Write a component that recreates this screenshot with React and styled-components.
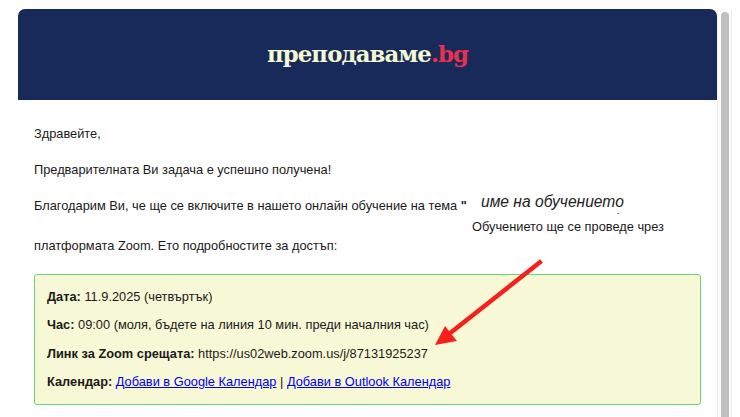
import React from "react";
import styled, { createGlobalStyle } from "styled-components";

const Global = createGlobalStyle`
  html, body { margin: 0; padding: 0; background: #fff; overflow: hidden; }
`;

const Page = styled.div`
  position: relative;
  width: 740px;
  height: 417px;
  overflow: hidden;
  display: flex;
  align-items: flex-start;
  padding: 9px 0 0 18px;
  box-sizing: border-box;
  font-family: "Liberation Sans", Arial, sans-serif;
  font-size: 12.8px;
  color: #1a1a1a;
`;

const Card = styled.main`
  width: 699px;
  flex: none;
`;

const Header = styled.header`
  height: 91px;
  background: #182a5a;
  border-radius: 7px 7px 0 0;
  display: flex;
  align-items: center;
  justify-content: center;
`;

const Logo = styled.div`
  font-family: "DejaVu Serif", serif;
  font-weight: 700;
  font-size: 22.8px;
  letter-spacing: -0.9px;
  color: #f7f8d2;
  margin-top: -1px;
  span { color: #e8304f; }
`;

const Body = styled.div`
  padding: 26px 16px 0;
  display: flex;
  flex-direction: column;
`;

const Para = styled.p`
  margin: 0;
  line-height: 16px;
  margin-bottom: ${(p) => p.$gap || 20}px;
`;

const TopicRow = styled.div`
  display: flex;
  align-items: flex-start;
  height: 41px;
`;

const TopicLead = styled.span`
  line-height: 16px;
  width: 438px;
  flex: none;
  margin-top: 1px;
  white-space: nowrap;
`;

const TopicSide = styled.div`
  display: flex;
  flex-direction: column;
`;

const TopicName = styled.span`
  font-style: italic;
  font-size: 15.6px;
  line-height: 20px;
  margin: -5px 0 0 9px;
  color: #222;
`;

const TopicDot = styled.i`
  display: block;
  width: 2px;
  height: 1px;
  background: #888;
  margin: 1px 0 0 145px;
`;

const TopicNote = styled.span`
  line-height: 16px;
  margin-top: 5px;
  white-space: nowrap;
`;

const InfoBox = styled.section`
  background: #f7f8d6;
  border: 1px solid #6bd66f;
  border-radius: 3px;
  height: 131px;
  box-sizing: border-box;
  padding: 14px 12px 0;
  display: flex;
  flex-direction: column;
  gap: 12.4px;
`;

const InfoRow = styled.div`
  line-height: 16px;
  b { font-weight: 700; }
  a { color: #0000ee; text-decoration: underline; }
`;

const ScrollTrack = styled.div`
  width: 15px;
  height: 408px;
  flex: none;
  box-sizing: border-box;
  background: #fbfbfb;
  border-left: 1px solid #ececec;
  border-right: 1px solid #ececec;
  padding: 3px 2px 0 3px;
`;

const ScrollThumb = styled.div`
  height: 420px;
  background: #c0c0c0;
  border-radius: 4px 4px 0 0;
`;

const ArrowOverlay = styled.svg`
  position: absolute;
  left: 0;
  top: 0;
  pointer-events: none;
`;

export default function App() {
  return (
    <Page>
      <Global />
      <Card>
        <Header>
          <Logo>
            преподаваме<span>.bg</span>
          </Logo>
        </Header>
        <Body>
          <Para>Здравейте,</Para>
          <Para $gap={19}>Предварителната Ви задача е успешно получена!</Para>
          <TopicRow>
            <TopicLead>
              Благодарим Ви, че ще се включите в нашето онлайн обучение на тема <b>"</b>
            </TopicLead>
            <TopicSide>
              <TopicName>име на обучението</TopicName>
              <TopicDot />
              <TopicNote>Обучението ще се проведе чрез</TopicNote>
            </TopicSide>
          </TopicRow>
          <Para $gap={20}>платформата Zoom. Ето подробностите за достъп:</Para>
          <InfoBox>
            <InfoRow>
              <b>Дата:</b> 11.9.2025 (четвъртък)
            </InfoRow>
            <InfoRow>
              <b>Час:</b> 09:00 (моля, бъдете на линия 10 мин. преди началния час)
            </InfoRow>
            <InfoRow>
              <b>Линк за Zoom срещата:</b> https://us02web.zoom.us/j/87131925237
            </InfoRow>
            <InfoRow>
              <b>Календар:</b> <a href="#google">Добави в Google Календар</a> | <a href="#outlook">Добави в Outlook Календар</a>
            </InfoRow>
          </InfoBox>
        </Body>
      </Card>
      <ScrollTrack>
        <ScrollThumb />
      </ScrollTrack>
      <ArrowOverlay width="740" height="417" viewBox="0 0 740 417">
        <line x1="541.5" y1="261" x2="449" y2="334" stroke="#f5201c" strokeWidth="4.5" />
        <polygon points="435,345 445,326 457,341" fill="#f5201c" />
      </ArrowOverlay>
    </Page>
  );
}
